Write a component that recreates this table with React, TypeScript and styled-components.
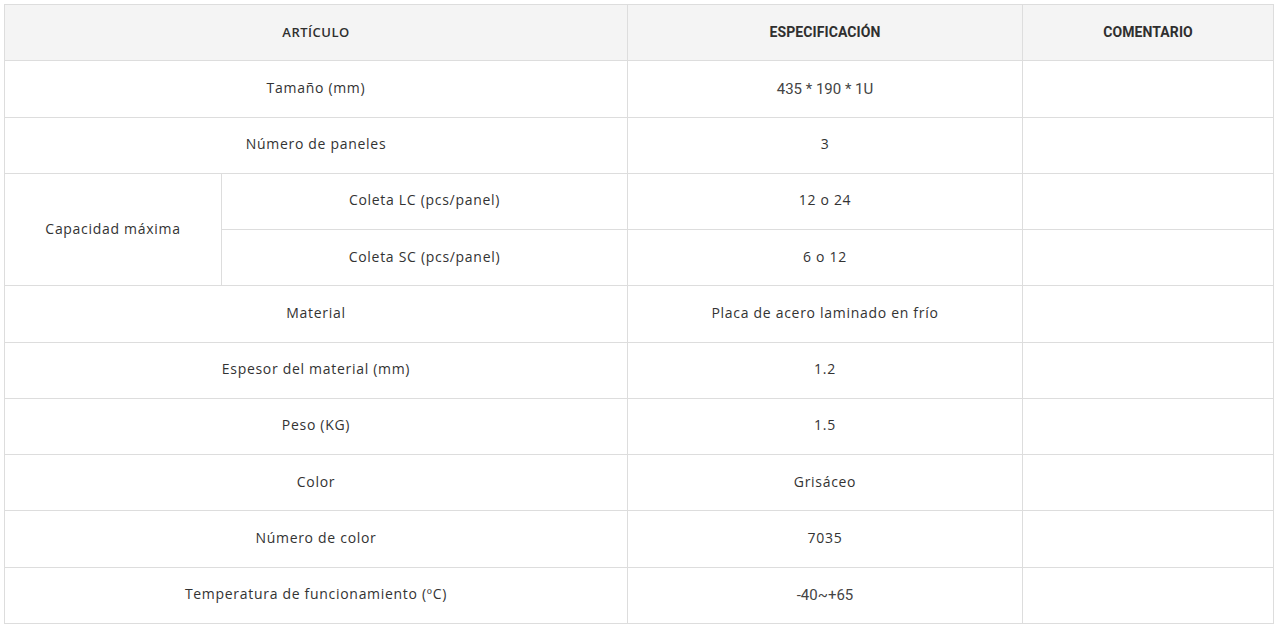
import React from "react";
import styled, { createGlobalStyle } from "styled-components";

const GlobalStyle = createGlobalStyle`
  html, body {
    margin: 0;
    padding: 0;
    background: #ffffff;
  }
  body {
    font-family: "Open Sans", "Noto Sans", sans-serif;
    color: #333333;
  }
`;

const Wrapper = styled.div`
  padding: 4px 7px 0 4px;
`;

const Table = styled.table`
  width: 100%;
  border-collapse: collapse;
  table-layout: fixed;
  border: 1px solid #dddddd;
`;

const HeadCell = styled.th<{ $alt?: boolean }>`
  height: 56.27px;
  box-sizing: border-box;
  background: #f4f4f4;
  border: 1px solid #dddddd;
  text-align: center;
  vertical-align: middle;
  font-family: ${(p) => (p.$alt ? '"Roboto", "Liberation Sans", sans-serif' : '"Open Sans", sans-serif')};
  font-weight: ${(p) => (p.$alt ? 700 : 600)};
  font-size: ${(p) => (p.$alt ? "14px" : "13px")};
  color: #2f2f2f;
  padding: 0 0 2px 0;
  letter-spacing: ${(p) => (p.$alt ? "0.1px" : "0.5px")};
`;

const Cell = styled.td<{ $narrow?: boolean }>`
  height: 56.27px;
  box-sizing: border-box;
  border: 1px solid #dddddd;
  text-align: center;
  vertical-align: middle;
  font-family: ${(p) => (p.$narrow ? '"Roboto", "Liberation Sans", sans-serif' : '"Open Sans", sans-serif')};
  font-size: ${(p) => (p.$narrow ? "15px" : "14px")};
  color: ${(p) => (p.$narrow ? "#444444" : "#333333")};
  padding: ${(p) => (p.$narrow ? "0" : "0 0 3px 0")};
  letter-spacing: ${(p) => (p.$narrow ? "0" : "0.7px")};
`;

type Row = { item: string; spec: string; narrow?: boolean };

const before: Row[] = [
  { item: "Tamaño (mm)", spec: "435 * 190 * 1U", narrow: true },
  { item: "Número de paneles", spec: "3" },
];

const after: Row[] = [
  { item: "Material", spec: "Placa de acero laminado en frío" },
  { item: "Espesor del material (mm)", spec: "1.2" },
  { item: "Peso (KG)", spec: "1.5" },
  { item: "Color", spec: "Grisáceo" },
  { item: "Número de color", spec: "7035" },
  { item: "Temperatura de funcionamiento (ºC)", spec: "-40~+65", narrow: true },
];

const SimpleRow = ({ row }: { row: Row }) => (
  <tr>
    <Cell colSpan={2}>{row.item}</Cell>
    <Cell $narrow={row.narrow}>{row.spec}</Cell>
    <Cell />
  </tr>
);

export default function App() {
  return (
    <>
      <GlobalStyle />
      <Wrapper>
        <Table>
          <colgroup>
            <col style={{ width: 217 }} />
            <col style={{ width: 406 }} />
            <col style={{ width: 395 }} />
            <col style={{ width: 251 }} />
          </colgroup>
          <thead>
            <tr>
              <HeadCell colSpan={2}>ARTÍCULO</HeadCell>
              <HeadCell $alt>ESPECIFICACIÓN</HeadCell>
              <HeadCell $alt>COMENTARIO</HeadCell>
            </tr>
          </thead>
          <tbody>
            {before.map((r) => (
              <SimpleRow key={r.item} row={r} />
            ))}
            <tr>
              <Cell rowSpan={2}>Capacidad máxima</Cell>
              <Cell>Coleta LC (pcs/panel)</Cell>
              <Cell>12 o 24</Cell>
              <Cell />
            </tr>
            <tr>
              <Cell>Coleta SC (pcs/panel)</Cell>
              <Cell>6 o 12</Cell>
              <Cell />
            </tr>
            {after.map((r) => (
              <SimpleRow key={r.item} row={r} />
            ))}
          </tbody>
        </Table>
      </Wrapper>
    </>
  );
}
